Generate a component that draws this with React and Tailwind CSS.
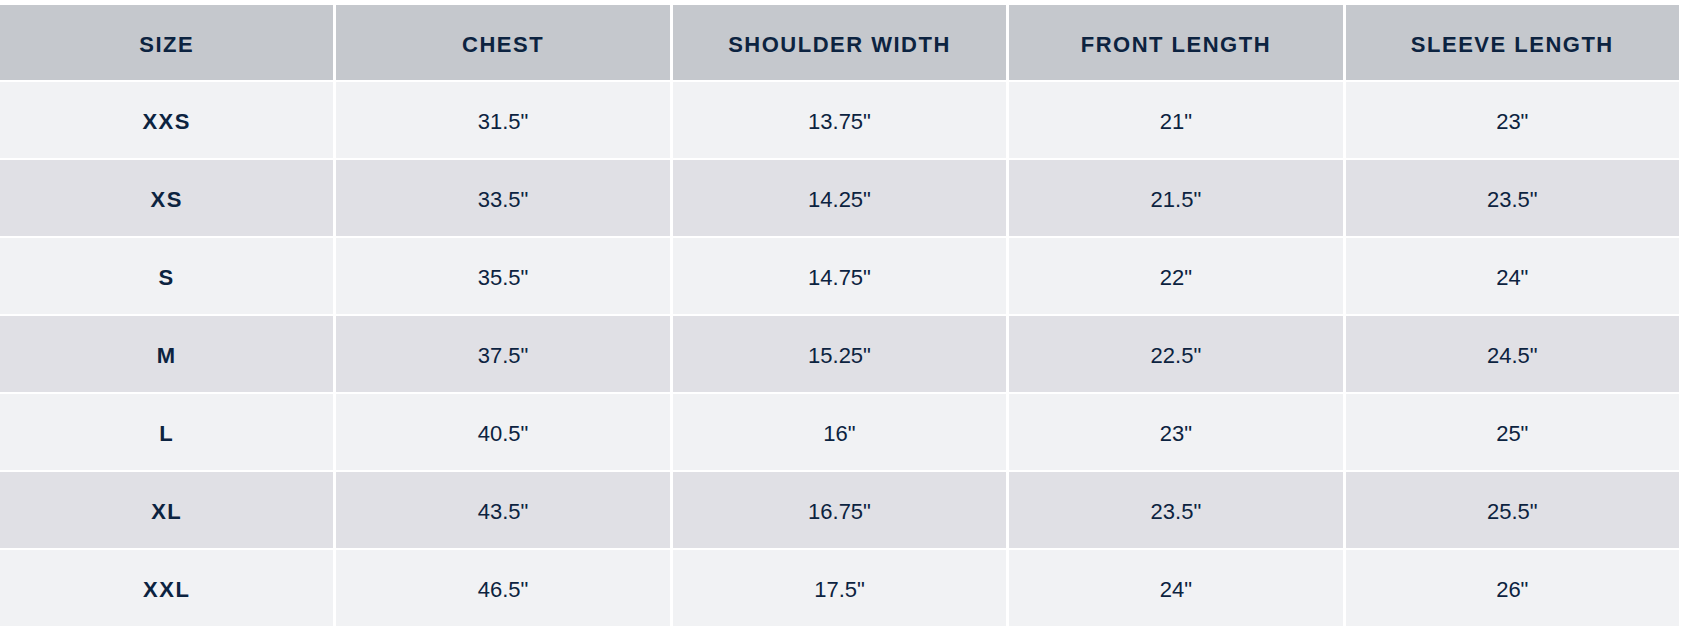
import React from "react";

const headers = ["SIZE", "CHEST", "SHOULDER WIDTH", "FRONT LENGTH", "SLEEVE LENGTH"];
const rows = [
  ["XXS", '31.5"', '13.75"', '21"', '23"'],
  ["XS", '33.5"', '14.25"', '21.5"', '23.5"'],
  ["S", '35.5"', '14.75"', '22"', '24"'],
  ["M", '37.5"', '15.25"', '22.5"', '24.5"'],
  ["L", '40.5"', '16"', '23"', '25"'],
  ["XL", '43.5"', '16.75"', '23.5"', '25.5"'],
  ["XXL", '46.5"', '17.5"', '24"', '26"'],
];

export default function App() {
  return (
    <div className="bg-white w-[1685px] h-[634px] pt-[5px]" style={{ fontFamily: '"Liberation Sans", Arial, sans-serif' }}>
      <div className="grid grid-cols-5 gap-x-[3px] gap-y-[2px] w-[1679px] text-[#0c2340]">
        {headers.map((h) => (
          <div key={h} className="h-[75px] bg-[#c5c8cd] flex items-center justify-center pt-[4px] text-[22px] leading-none font-bold tracking-[1.5px]">
            {h}
          </div>
        ))}
        {rows.map((r, i) =>
          r.map((c, j) => (
            <div
              key={i + "-" + j}
              className={
                "h-[76px] flex items-center justify-center pt-[4px] text-[22px] leading-none " +
                (i % 2 === 0 ? "bg-[#f1f2f4] " : "bg-[#e0e0e5] ") +
                (j === 0 ? "font-bold tracking-[1.5px]" : "font-normal")
              }
            >
              {c}
            </div>
          ))
        )}
      </div>
    </div>
  );
}
